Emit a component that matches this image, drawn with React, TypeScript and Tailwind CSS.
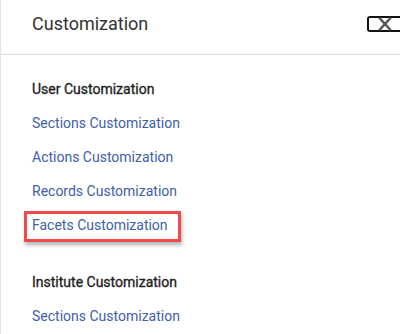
import React from "react";

const linkCls = "text-[14px] text-[#4060a8] leading-[20px]";
const headCls = "text-[14px] font-normal text-[#1f1f1f] leading-[20px] [-webkit-text-stroke:0.35px_#1f1f1f]";

function Row({ children, className = "" }: { children: React.ReactNode; className?: string }) {
  return <div className={"h-[34px] flex items-center " + className}>{children}</div>;
}

export default function App() {
  return (
    <div
      className="relative w-[400px] h-[334px] bg-white overflow-hidden border-l border-[#e4e4e4]"
      style={{ fontFamily: "Roboto, 'Liberation Sans', sans-serif" }}
    >
      {/* left edge ticks */}
      <div className="absolute left-[-1px] top-[26px] w-[1px] h-[2px] bg-[#c8c8c8]" />
      <div className="absolute left-[-1px] top-[95px] w-[1px] h-[13px] bg-[#5b7bb8]" />
      <div className="absolute left-[-1px] top-[129px] w-[1px] h-[2px] bg-[#c8c8c8]" />
      <div className="absolute left-[-1px] top-[257px] w-[1px] h-[2px] bg-[#c8c8c8]" />

      {/* header */}
      <div className="h-[55px] border-b border-[#d9d9d9] flex items-start justify-between pl-[31px]">
        <div className="text-[18px] text-[#333333] leading-[24px] mt-[12px]">Customization</div>
        <div className="w-[44px] h-[16px] ml-auto mr-[-11px] mt-[16px] border-2 border-[#111111] rounded-[3px] flex items-center pl-[8px]">
          <svg width="16" height="14" viewBox="0 0 16 14">
            <path d="M2 0.5 L14 13.5 M14 0.5 L2 13.5" stroke="#555555" strokeWidth="2.4" />
          </svg>
        </div>
      </div>

      {/* body */}
      <div className="pl-[31px] pt-[17px]">
        <Row className="h-[33px]">
          <span className={headCls}>User Customization</span>
        </Row>
        <Row><span className={linkCls}>Sections Customization</span></Row>
        <Row><span className={linkCls}>Actions Customization</span></Row>
        <Row><span className={linkCls}>Records Customization</span></Row>
        <Row>
          <span className="relative">
            <span className={linkCls}>Facets Customization</span>
            <span className="absolute left-[-8px] right-[-13px] top-[-2px] bottom-[-5px] border-[3px] border-[#f04a4a] shadow-[1px_3px_4px_rgba(0,0,0,0.3)]" />
          </span>
        </Row>
        <div className="h-[23px]" />
        <Row className="h-[33px]">
          <span className={headCls}>Institute Customization</span>
        </Row>
        <Row><span className={linkCls}>Sections Customization</span></Row>
      </div>
    </div>
  );
}
